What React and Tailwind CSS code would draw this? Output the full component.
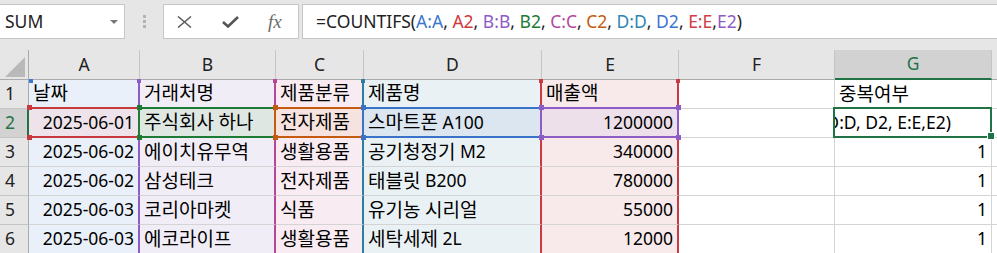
import React from 'react';

const FONT = { fontFamily: '"Noto Sans", "Noto Sans CJK KR", sans-serif' };

// right / bottom borders double as the coloured range outlines of the formula being edited
const cols = [
  {
    key: 'A', w: 'w-[111px]', bg: 'bg-[#e9f0fa]', bg2: 'bg-[#eee3ea]', num: true,
    r: 'border-r-2 border-r-[#8e5cc7]', r2: 'border-r-2 border-r-[#1d7b36]', b: 'border-b-2 border-b-[#c8393e]',
  },
  {
    key: 'B', w: 'w-[136px]', bg: 'bg-[#f1edf7]', bg2: 'bg-[#dfe7e3]',
    r: 'border-r-2 border-r-[#b5479b]', r2: 'border-r-2 border-r-[#c55a11]', b: 'border-b-2 border-b-[#1d7b36]',
  },
  {
    key: 'C', w: 'w-[88px]', bg: 'bg-[#f8ebf1]', bg2: 'bg-[#f6e2df]',
    r: 'border-r-2 border-r-[#2e7e9c]', r2: 'border-r-2 border-r-[#3b72c9]', b: 'border-b-2 border-b-[#c55a11]',
  },
  {
    key: 'D', w: 'w-[178px]', bg: 'bg-[#eaf1f5]', bg2: 'bg-[#dbe6f1]',
    r: 'border-r-2 border-r-[#c93a42]', r2: 'border-r-2 border-r-[#8e5cc7]', b: 'border-b-2 border-b-[#3b72c9]',
  },
  {
    key: 'E', w: 'w-[137px]', bg: 'bg-[#f8eaeb]', bg2: 'bg-[#ede0ea]', num: true,
    r: 'border-r-2 border-r-[#c93a42]', r2: 'border-r-2 border-r-[#8e5cc7]', b: 'border-b-2 border-b-[#8e5cc7]',
  },
  {
    key: 'F', w: 'w-[156px]', bg: 'bg-white', bg2: 'bg-white',
    r: 'border-r border-r-[#d4d4d4]', r2: 'border-r border-r-[#d4d4d4]', b: 'border-b border-b-[#d4d4d4]',
  },
  {
    key: 'G', w: 'w-[157px]', bg: 'bg-white', bg2: 'bg-white', num: true,
    r: 'border-r border-r-[#d4d4d4]', r2: 'border-r border-r-[#d4d4d4]', b: 'border-b border-b-[#d4d4d4]',
  },
];

const rows = [
  ['날짜', '거래처명', '제품분류', '제품명', '매출액', '', '중복여부'],
  ['2025-06-01', '주식회사 하나', '전자제품', '스마트폰 A100', '1200000', '', null],
  ['2025-06-02', '에이치유무역', '생활용품', '공기청정기 M2', '340000', '', '1'],
  ['2025-06-02', '삼성테크', '전자제품', '태블릿 B200', '780000', '', '1'],
  ['2025-06-03', '코리아마켓', '식품', '유기농 시리얼', '55000', '', '1'],
  ['2025-06-03', '에코라이프', '생활용품', '세탁세제 2L', '12000', '', '1'],
];

const formula = [
  ['=COUNTIFS(', 'text-[#222]'],
  ['A:A', 'text-[#3b78d0]'],
  [', ', 'text-[#222]'],
  ['A2', 'text-[#d0393d]'],
  [', ', 'text-[#222]'],
  ['B:B', 'text-[#8e5cc7]'],
  [', ', 'text-[#222]'],
  ['B2', 'text-[#1d7b36]'],
  [', ', 'text-[#222]'],
  ['C:C', 'text-[#b5479b]'],
  [', ', 'text-[#222]'],
  ['C2', 'text-[#c55a11]'],
  [', ', 'text-[#222]'],
  ['D:D', 'text-[#2e86b0]'],
  [', ', 'text-[#222]'],
  ['D2', 'text-[#3b74d3]'],
  [', ', 'text-[#222]'],
  ['E:E', 'text-[#d13c46]'],
  [',', 'text-[#222]'],
  ['E2', 'text-[#8f5dc6]'],
  [')', 'text-[#222]'],
];

const formulaPlain = formula.map(([t]) => t).join('');

// hangul in Malgun Gothic sits larger than in Noto CJK, so bump those runs
function Txt({ v }) {
  return v.split(/([\uAC00-\uD7A3]+)/).map((part, i) =>
    /[\uAC00-\uD7A3]/.test(part) ? (
      <span key={i} className="text-[19px]">{part}</span>
    ) : (
      <span key={i} className="whitespace-pre">{part}</span>
    )
  );
}

function FormulaBar() {
  return (
    <div className="h-[50px] bg-[#e6e6e6] flex items-start pt-[4px]">
      <div className="ml-[-1px] w-[126px] h-[35px] bg-white border border-[#c6c6c6] flex items-center justify-between pl-[5px] pr-[6px] text-[#222]">
        <span>SUM</span>
        <svg width="8" height="4" viewBox="0 0 8 4">
          <polygon points="0,0 8,0 4,4" fill="#777" />
        </svg>
      </div>
      <div className="w-[38px] h-[35px] flex flex-col items-center justify-center gap-[2px]">
        <span className="w-[3px] h-[3px] bg-[#b4b4b4]" />
        <span className="w-[3px] h-[3px] bg-[#b4b4b4]" />
        <span className="w-[3px] h-[3px] bg-[#b4b4b4]" />
      </div>
      <div className="w-[136px] h-[35px] bg-white border border-[#c6c6c6] flex items-center pl-[13px]">
        <svg width="15" height="12" viewBox="0 0 15 12">
          <path d="M1 0.5 L14 11.5 M14 0.5 L1 11.5" stroke="#5c5c5c" strokeWidth="1.5" fill="none" />
        </svg>
        <svg className="ml-[30px]" width="17" height="12" viewBox="0 0 17 12">
          <polyline points="1,6 6,10.5 16,1" stroke="#555" strokeWidth="2.6" fill="none" />
        </svg>
        <span
          className="ml-[29px] text-[19px] italic text-[#6b6b6b] leading-none"
          style={{ fontFamily: '"Liberation Serif", serif' }}
        >
          fx
        </span>
      </div>
      <div className="ml-[3px] flex-1 h-[35px] bg-white border border-[#c6c6c6] border-r-0 flex items-center pl-[13px] whitespace-nowrap">
        {formula.map(([t, c], i) => (
          <span key={i} className={`${c} whitespace-pre`}>{t}</span>
        ))}
      </div>
    </div>
  );
}

function HeaderRow() {
  return (
    <div className="flex h-[30px]">
      <div className="w-[29px] h-full bg-[#e6e6e6] border-r border-b border-[#ababab] flex items-end justify-end pr-[3px] pb-[2px]">
        <svg width="20" height="20" viewBox="0 0 20 20">
          <polygon points="20,0 20,20 0,20" fill="#b9b9b9" />
        </svg>
      </div>
      {cols.map((c) =>
        c.key === 'G' ? (
          <div
            key={c.key}
            className={`${c.w} h-full bg-[#d2d2d2] border-r border-r-[#c5c5c5] border-b-2 border-b-[#217346] flex items-center justify-center text-[#217346]`}
          >
            {c.key}
          </div>
        ) : (
          <div
            key={c.key}
            className={`${c.w} h-full bg-[#e6e6e6] border-r border-r-[#c5c5c5] border-b border-b-[#ababab] flex items-center justify-center text-[#222]`}
          >
            {c.key}
          </div>
        )
      )}
      <div className="flex-1 h-full bg-[#e6e6e6] border-b border-[#ababab]" />
    </div>
  );
}

function DataRow({ cells, idx }) {
  const active = idx === 1;
  return (
    <div className="flex h-[29px]">
      {active ? (
        <div className="w-[29px] h-full bg-[#d2d2d2] border-b border-b-[#c5c5c5] border-r-2 border-r-[#217346] flex items-center pl-[5px] text-[#217346]">
          {idx + 1}
        </div>
      ) : (
        <div className="w-[29px] h-full bg-[#e6e6e6] border-b border-b-[#c5c5c5] border-r border-r-[#ababab] flex items-center pl-[5px] text-[#222]">
          {idx + 1}
        </div>
      )}
      {cols.map((c, ci) => {
        const v = cells[ci];
        const right = c.num && idx > 0;
        const bg = active ? c.bg2 : c.bg;
        const br = active ? c.r2 : c.r;
        const bb = idx <= 1 ? c.b : 'border-b border-b-[#d4d4d4]';
        if (v === null) {
          return (
            <div
              key={c.key}
              className={`${c.w} h-full ${bg} ${br} ${bb} flex items-center justify-end overflow-hidden whitespace-nowrap pr-[40px] text-black`}
            >
              <span className="shrink-0 whitespace-pre">{formulaPlain}</span>
            </div>
          );
        }
        return (
          <div
            key={c.key}
            className={`${c.w} h-full ${bg} ${br} ${bb} flex items-center overflow-hidden whitespace-nowrap px-[4px] text-black ${right ? 'justify-end' : 'justify-start'}`}
          >
            <Txt v={v} />
          </div>
        );
      })}
      <div className="flex-1 h-full bg-white border-b border-[#d4d4d4]" />
    </div>
  );
}

// small corner handles of the range outlines, drawn over the grid lines
const handles = [
  ['left-[29px] top-[29px] w-[4px] h-[4px]', 'bg-[#3b78d0]'],
  ['left-[137px] top-[29px] w-[4px] h-[4px]', 'bg-[#8e5cc7]'],
  ['left-[273px] top-[29px] w-[4px] h-[4px]', 'bg-[#b5479b]'],
  ['left-[361px] top-[29px] w-[4px] h-[4px]', 'bg-[#2e7e9c]'],
  ['left-[539px] top-[29px] w-[4px] h-[4px]', 'bg-[#c93a42]'],
  ['left-[676px] top-[29px] w-[4px] h-[4px]', 'bg-[#c93a42]'],
  ['left-[27px] top-[55px] w-[5px] h-[5px]', 'bg-[#c8393e]'],
  ['left-[27px] top-[85px] w-[5px] h-[5px]', 'bg-[#c8393e]'],
  ['left-[137px] top-[55px] w-[5px] h-[5px]', 'bg-[#1d7b36]'],
  ['left-[137px] top-[85px] w-[5px] h-[5px]', 'bg-[#1d7b36]'],
  ['left-[273px] top-[55px] w-[5px] h-[5px]', 'bg-[#c55a11]'],
  ['left-[273px] top-[85px] w-[5px] h-[5px]', 'bg-[#c55a11]'],
  ['left-[361px] top-[55px] w-[5px] h-[5px]', 'bg-[#3b72c9]'],
  ['left-[361px] top-[85px] w-[5px] h-[5px]', 'bg-[#3b72c9]'],
  ['left-[539px] top-[55px] w-[5px] h-[5px]', 'bg-[#8e5cc7]'],
  ['left-[539px] top-[85px] w-[5px] h-[5px]', 'bg-[#8e5cc7]'],
  ['left-[676px] top-[55px] w-[5px] h-[5px]', 'bg-[#8e5cc7]'],
  ['left-[676px] top-[85px] w-[5px] h-[5px]', 'bg-[#8e5cc7]'],
];

export default function App() {
  return (
    <div className="w-[997px] h-[253px] overflow-hidden bg-white text-[17.5px] leading-none" style={FONT}>
      <FormulaBar />
      <div className="relative">
        <HeaderRow />
        {rows.map((r, i) => (
          <DataRow key={i} cells={r} idx={i} />
        ))}
        {handles.map(([pos, bg], i) => (
          <div key={i} className={`absolute ${pos} ${bg}`} />
        ))}
        {/* active cell G2 and its fill handle */}
        <div className="absolute left-[833px] top-[57px] w-[159px] h-[31px] border-2 border-[#217346]" />
        <div className="absolute left-[987px] top-[82px] w-[8px] h-[8px] bg-[#217346] border border-white" />
      </div>
    </div>
  );
}
